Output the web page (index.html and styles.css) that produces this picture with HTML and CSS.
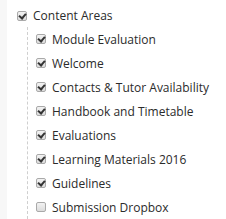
FILE: index.html
```html
<!DOCTYPE html>
<html>
<head>
    <meta charset="utf-8">
    <title>Content Areas</title>
    <link rel="stylesheet" href="styles.css">
</head>
<body>
<div class="gutter"></div>
<div class="tree">
    <div class="node root">
        <span class="check on"></span>Content Areas
    </div>
    <div class="children">
        <div class="node"><span class="check on"></span>Module Evaluation</div>
        <div class="node"><span class="check on"></span>Welcome</div>
        <div class="node"><span class="check on"></span>Contacts &amp; Tutor Availability</div>
        <div class="node"><span class="check on"></span>Handbook and Timetable</div>
        <div class="node"><span class="check on"></span>Evaluations</div>
        <div class="node"><span class="check on"></span>Learning Materials 2016</div>
        <div class="node"><span class="check on"></span>Guidelines</div>
        <div class="node"><span class="check"></span>Submission Dropbox</div>
    </div>
</div>
</body>
</html>
```

FILE: styles.css
```css
* {
    padding: 0;
    margin: 0;
    box-sizing: border-box;
}

body {
    display: flex;
    height: 219px;
    overflow: hidden;
    background-color: #ffffff;
    font-family: "Open Sans", "Noto Sans", sans-serif;
    font-size: 12px;
    color: #2b2b2b;
}

.gutter {
    width: 7px;
    background-color: #f7f7f7;
}

.tree {
    padding: 4px 0 0 10px;
}

.node {
    display: flex;
    align-items: center;
    height: 24px;
    white-space: nowrap;
}

.node.root {
    height: 23px;
}

.children {
    margin-left: 10px;
    padding-left: 8px;
    border-left: 1px dashed #cfcfcf;
}

.check {
    position: relative;
    flex: none;
    width: 10px;
    height: 10px;
    margin-right: 6px;
    border: 1px solid #a9a9a9;
    border-radius: 2px;
    background: linear-gradient(#f2f2f2, #dcdcdc);
}

.check.on::after {
    content: "";
    position: absolute;
    left: 2px;
    top: 0px;
    width: 3px;
    height: 5px;
    border: solid #333333;
    border-width: 0 2px 2px 0;
    transform: rotate(40deg);
}
```
